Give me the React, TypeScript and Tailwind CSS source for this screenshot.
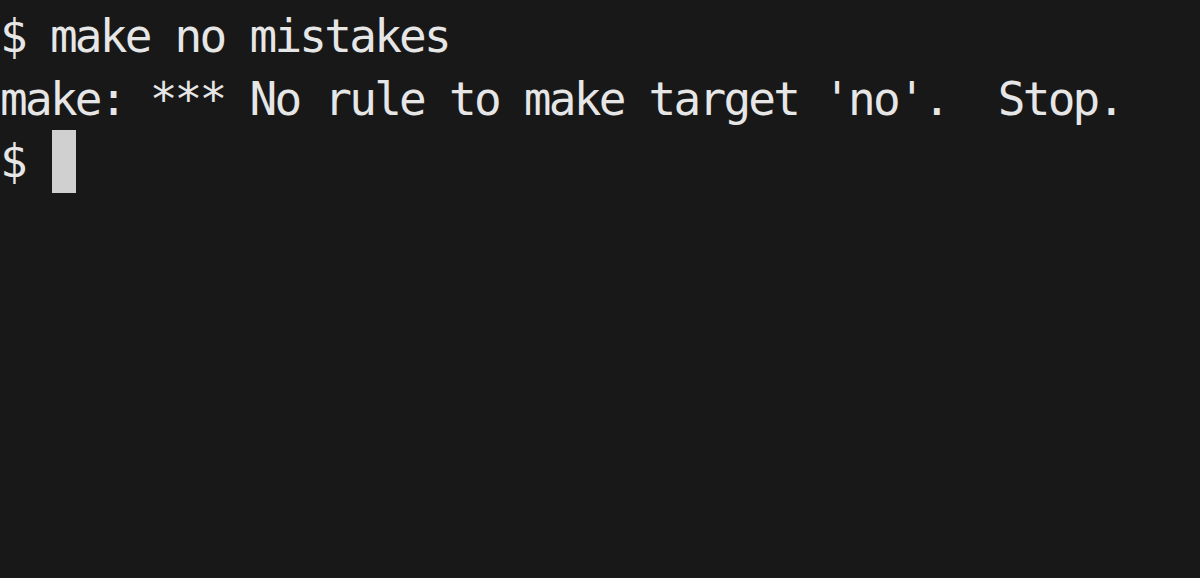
export default function App() {
  return (
    <div className="min-h-screen w-full bg-[#181818] overflow-hidden">
      <div
        className="pt-[5px] pl-0 text-[46px] leading-[62.5px] tracking-[-2.75px] text-[#e6e6e6] whitespace-pre"
        style={{ fontFamily: '"DejaVu Sans Mono", "Liberation Mono", monospace' }}
      >
        <div>$ make no mistakes</div>
        <div>make: *** No rule to make target 'no'.  Stop.</div>
        <div className="flex items-start">
          <span>$ </span>
          <span className="inline-block ml-[2px] w-[24px] h-[63px] bg-[#d0d0d0]" />
        </div>
      </div>
    </div>
  );
}
